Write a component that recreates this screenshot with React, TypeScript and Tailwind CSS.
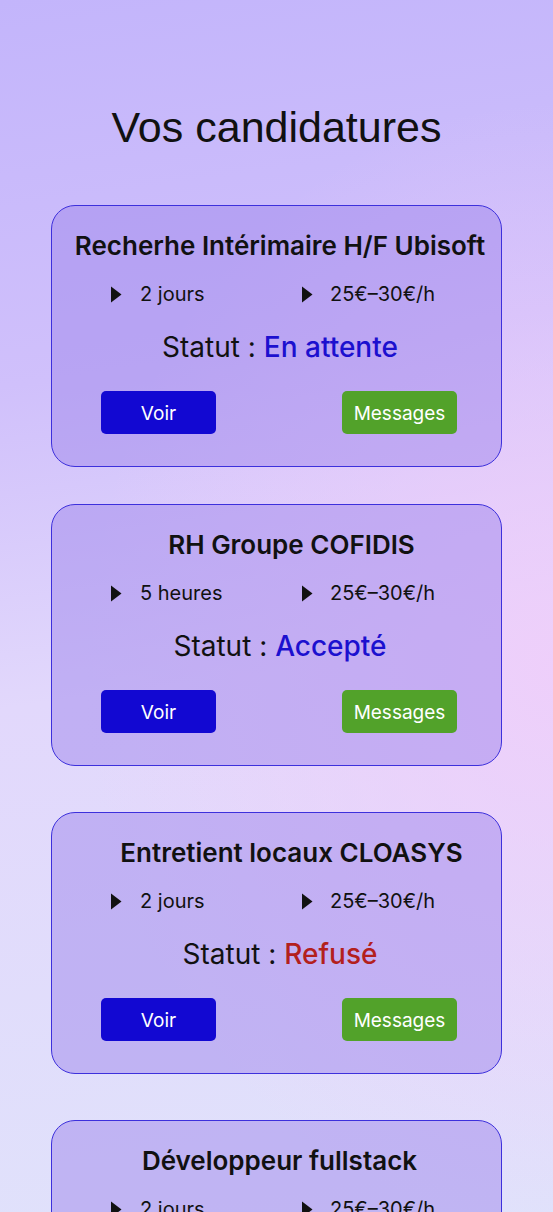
import React from 'react'

type Application = {
  title: string
  duration: string
  pay: string
  status: string
  statusColor: string
  titleOffset: string
  gap: string
}

const applications: Application[] = [
  {
    title: 'Recherhe Intérimaire H/F Ubisoft',
    duration: '2 jours',
    pay: '25€–30€/h',
    status: 'En attente',
    statusColor: 'text-[#1c10cf]',
    titleOffset: 'pl-[7px]',
    gap: 'mb-[37px]',
  },
  {
    title: 'RH Groupe COFIDIS',
    duration: '5 heures',
    pay: '25€–30€/h',
    status: 'Accepté',
    statusColor: 'text-[#1c10cf]',
    titleOffset: 'pl-[30px]',
    gap: 'mb-[46px]',
  },
  {
    title: 'Entretient locaux CLOASYS',
    duration: '2 jours',
    pay: '25€–30€/h',
    status: 'Refusé',
    statusColor: 'text-[#b3201d]',
    titleOffset: 'pl-[30px]',
    gap: 'mb-[46px]',
  },
  {
    title: 'Développeur fullstack',
    duration: '2 jours',
    pay: '25€–30€/h',
    status: 'En attente',
    statusColor: 'text-[#1c10cf]',
    titleOffset: 'pl-[6px]',
    gap: 'mb-[46px]',
  },
]

function Arrow() {
  return (
    <svg width="12" height="17" viewBox="0 0 12 17" className="shrink-0">
      <path d="M1 0.5 L11.5 8.5 L1 16.5 Z" fill="#111111" />
    </svg>
  )
}

function ApplicationCard({ app }: { app: Application }) {
  return (
    <div
      className={`w-[451px] mx-auto rounded-[24px] border border-[#3d30dc] bg-[rgba(160,135,235,0.5)] pt-[24px] pb-[32px] ${app.gap}`}
    >
      <h2
        className={`text-center text-[26px] leading-[32px] font-semibold text-[#111111] ${app.titleOffset}`}
      >
        {app.title}
      </h2>

      {/* Infos */}
      <div className="flex items-center pl-[58px] mt-[18px] h-[28px] text-[20px] text-[#111111]">
        <div className="flex items-center gap-[18px] w-[191px]">
          <Arrow />
          <span>{app.duration}</span>
        </div>
        <div className="flex items-center gap-[17px]">
          <Arrow />
          <span>{app.pay}</span>
        </div>
      </div>

      <p className="text-center pl-[7px] mt-[21px] text-[28px] leading-[36px] text-[#111111]">
        Statut : <span className={`font-medium ${app.statusColor}`}>{app.status}</span>
      </p>

      {/* Actions */}
      <div className="flex justify-between pl-[49px] pr-[44px] mt-[26px]">
        <button className="w-[115px] h-[43px] rounded-[5px] bg-[#1208d2] pt-[3px] text-white text-[19px]">
          Voir
        </button>
        <button className="w-[115px] h-[43px] rounded-[5px] bg-[#52a22a] pt-[3px] text-white text-[19px]">
          Messages
        </button>
      </div>
    </div>
  )
}

export default function App() {
  return (
    <main
      className="relative h-screen overflow-hidden bg-[linear-gradient(172deg,#c3b5fb_0%,#d0c0fb_30%,#e2d8fc_55%,#e0e2fb_100%)]"
      style={{ fontFamily: 'Inter, "Noto Sans", sans-serif' }}
    >
      <div className="absolute inset-0 pointer-events-none bg-[radial-gradient(ellipse_at_100%_55%,rgba(240,205,250,0.85)_0%,rgba(240,205,250,0)_60%)]" />
      <div className="relative">
        <h1
          className="pt-[101px] text-center text-[43px] leading-[52px] text-[#111111]"
          style={{ fontFamily: '"Liberation Sans", Arial, sans-serif' }}
        >
          Vos candidatures
        </h1>
        <div className="mt-[52px]">
          {applications.map((app) => (
            <ApplicationCard key={app.title} app={app} />
          ))}
        </div>
      </div>
    </main>
  )
}
